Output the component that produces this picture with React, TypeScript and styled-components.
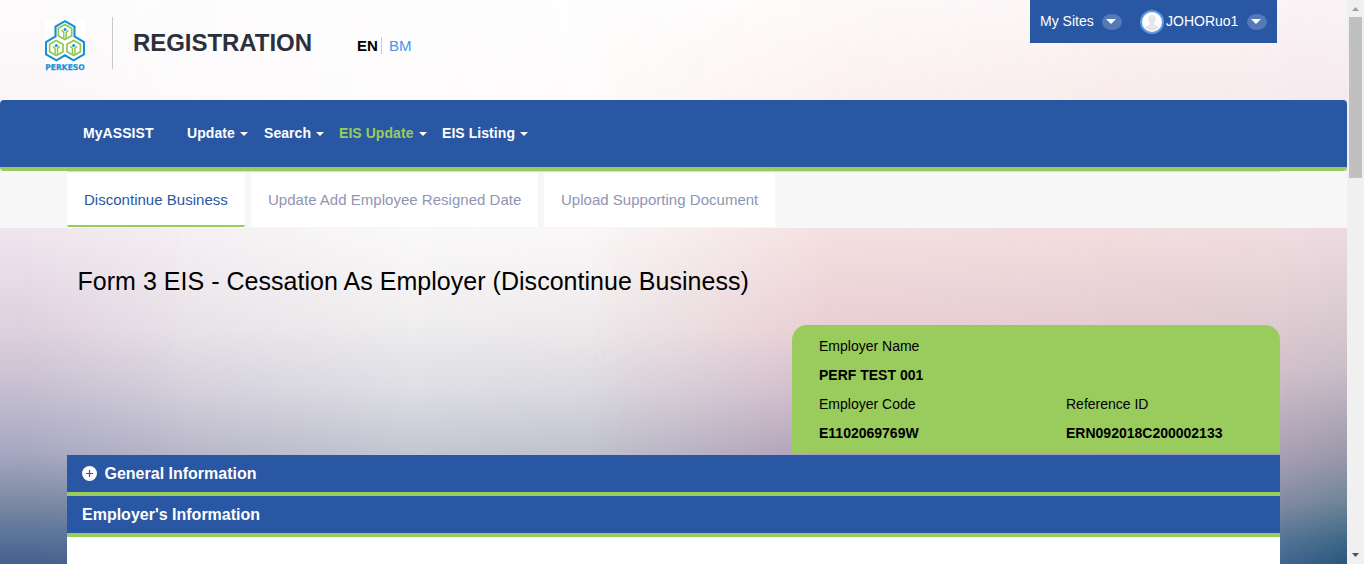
import React from "react";
import styled, { createGlobalStyle } from "styled-components";

const BLUE = "#2957a4";
const GREEN = "#99cc5c";

const GlobalStyle = createGlobalStyle`
  * { box-sizing: border-box; }
  html, body { margin: 0; padding: 0; overflow: hidden; }
  body { font-family: "Liberation Sans", Arial, sans-serif; font-size: 14px; color: #000; }
`;

const Frame = styled.div`
  display: flex;
  height: 564px;
  width: 1364px;
  overflow: hidden;
`;

const Page = styled.div`
  position: relative;
  isolation: isolate;
  width: 1347px;
  height: 564px;
  overflow: hidden;
`;

const Backdrop = styled.div`
  position: absolute;
  inset: 0;
  z-index: -1;
`;

/* One vertical colour ramp, faded in horizontally between two x positions. */
const Ramp = styled.div<{ $stops: string; $from?: number; $to?: number }>`
  position: absolute;
  inset: 0;
  background: linear-gradient(to bottom, ${(p) => p.$stops});
  ${(p) =>
    p.$to !== undefined
      ? `mask-image: linear-gradient(to right, transparent ${p.$from}px, #000 ${p.$to}px);`
      : ""}
`;

const Header = styled.header`
  display: flex;
  align-items: flex-start;
  height: 100px;
  padding: 0 70px 0 45px;
`;

const LogoBox = styled.div`
  width: 40px;
  height: 50px;
  margin-top: 20px;
  background: #fff;
`;

const Divider = styled.div`
  width: 1px;
  height: 52px;
  margin: 17px 20px 0 27px;
  background: #c8c8c8;
`;

const SiteTitle = styled.h1`
  margin: 29px 0 0;
  width: 224px;
  font-size: 24px;
  letter-spacing: -0.05px;
  line-height: 28px;
  color: #2b303b;
`;

const Languages = styled.div`
  display: flex;
  margin-top: 37px;
  font-size: 15px;
  line-height: 17px;
`;

const Language = styled.span<{ $active?: boolean }>`
  color: ${(p) => (p.$active ? "#000" : "#3b9ae8")};
  font-weight: ${(p) => (p.$active ? 700 : 400)};
  ${(p) => (p.$active ? "width: 25px; border-right: 1px solid #ccc;" : "padding-left: 7px;")}
`;

const UserBar = styled.div`
  display: flex;
  align-items: center;
  width: 247px;
  height: 43px;
  margin-left: auto;
  padding-left: 10px;
  background: ${BLUE};
  color: #fff;
`;

const UserText = styled.span<{ $width: number }>`
  width: ${(p) => p.$width}px;
  margin-top: -1px;
  white-space: nowrap;
`;

const DropPill = styled.span<{ $gap?: number }>`
  display: flex;
  align-items: center;
  justify-content: center;
  width: 20px;
  height: 16px;
  margin-right: ${(p) => p.$gap ?? 0}px;
  padding-right: 3px;
  border-radius: 50%;
  background: #5479b6;
`;

const Avatar = styled.svg`
  width: 24px;
  height: 24px;
  margin-right: 2px;
`;

const Caret = styled.i<{ $size?: number }>`
  display: block;
  border: ${(p) => p.$size ?? 4}px solid transparent;
  border-top-color: #fff;
  border-bottom: 0;
`;

const Nav = styled.nav`
  display: flex;
  align-items: center;
  height: 71px;
  padding-left: 83px;
  background: ${BLUE};
  border-bottom: 4px solid ${GREEN};
  border-radius: 4px;
`;

const NavItem = styled.a<{ $width: number; $gap?: number; $active?: boolean }>`
  display: flex;
  align-items: center;
  justify-content: space-between;
  width: ${(p) => p.$width}px;
  margin-right: ${(p) => p.$gap ?? 15}px;
  color: ${(p) => (p.$active ? GREEN : "#fff")};
  font-weight: 700;
  letter-spacing: 0.06px;
  line-height: 16px;
  padding-bottom: 1px;
  white-space: nowrap;

  ${Caret} {
    margin-top: 2px;
  }
`;

const TabStrip = styled.div`
  height: 57px;
  padding: 0 67px;
  background: #f7f7f7;
`;

const Tabs = styled.div`
  display: flex;
  gap: 6px;
  height: 56px;
  border-top: 1px solid #dcdcdc;
`;

const Tab = styled.a<{ $width: number; $active?: boolean }>`
  width: ${(p) => p.$width}px;
  padding-left: 17px;
  font-size: 15px;
  letter-spacing: 0.02px;
  line-height: 56px;
  white-space: nowrap;
  background: #fff;
  color: ${(p) => (p.$active ? BLUE : "#8f95b2")};
  border-bottom: ${(p) => (p.$active ? `2px solid ${GREEN}` : "0")};
  border-radius: ${(p) => (p.$active ? "0 0 2px 2px" : "0")};
`;

const Content = styled.main`
  display: flex;
  flex-direction: column;
  padding: 0 67px;
`;

const FormTitle = styled.h2`
  height: 97px;
  margin: 0;
  padding: 39px 0 0 10.5px;
  font-size: 25px;
  letter-spacing: 0.03px;
  line-height: 29px;
  font-weight: 400;
`;

const EmployerCard = styled.section`
  align-self: flex-end;
  display: grid;
  grid-template-columns: 247px 1fr;
  grid-auto-rows: 29px;
  width: 488px;
  height: 128px;
  margin-bottom: 2px;
  padding: 7px 0 0 27px;
  line-height: 29px;
  background: ${GREEN};
  border-radius: 15px 15px 0 0;
`;

const Field = styled.span<{ $bold?: boolean; $wide?: boolean }>`
  font-weight: ${(p) => (p.$bold ? 700 : 400)};
  grid-column: ${(p) => (p.$wide ? "1 / -1" : "auto")};
`;

const SectionBar = styled.div`
  display: flex;
  align-items: center;
  height: 41px;
  padding-left: 15px;
  gap: 8px;
  background: ${BLUE};
  border-bottom: 4px solid ${GREEN};
  color: #fff;
  font-size: 16px;
  font-weight: 700;
`;

const Panel = styled.div`
  height: 40px;
  background: #fff;
`;

const Scrollbar = styled.div`
  display: flex;
  flex-direction: column;
  align-items: center;
  width: 17px;
  background: #f0f0f0;
`;

const Thumb = styled.div`
  width: 13px;
  height: 161px;
  margin-bottom: auto;
  background: #c0c0c0;
`;

const ScrollArrow = styled.svg`
  width: 17px;
  height: 17px;
`;

const PlusBadge = styled.svg`
  width: 15px;
  height: 15px;
  margin-left: -0.5px;
`;

const Cell = ({ x, y }: { x: number; y: number }) => (
  <g transform={`translate(${x} ${y})`} fill="none" stroke="#8fc850" strokeWidth="1.7">
    <path d="M0-7.500 6.700-3.700V3.700L0 7.500-6.700 3.700V-3.700Z" />
    <path d="M-3.400-1.600-1.200.4V6M3.400-1.600 1.200.4V6" strokeWidth="1.5" />
    <circle cy="-2.600" r="1.500" fill="#1690d4" stroke="none" />
  </g>
);

const Logo = () => (
  <svg width="40" height="54" viewBox="0 0 40 54">
    <path
      d="M20 1.200 29.500 6.500V16.300L39 22V34.300L28.500 40.300 20 35.300 11.500 40.300 1 34.300V22L10.500 16.300V6.500Z"
      fill="#fff"
      stroke="#1690d4"
      strokeWidth="2.100"
    />
    <Cell x={20} y={12} />
    <Cell x={11.3} y={28} />
    <Cell x={28.7} y={28} />
    <text
      x="0.2"
      y="49.7"
      textLength="39.6"
      lengthAdjust="spacingAndGlyphs"
      fontFamily="DejaVu Sans, sans-serif"
      fontSize="7.9"
      fontWeight="700"
      fill="#1690d4"
      stroke="#1690d4"
      strokeWidth="0.25"
    >
      PERKESO
    </text>
  </svg>
);

const PlusIcon = () => (
  <PlusBadge viewBox="0 0 15 15">
    <circle cx="7.5" cy="7.5" r="7.5" fill="#fff" />
    <path d="M7.5 4v7M4 7.5h7" stroke={BLUE} strokeWidth="1.2" />
  </PlusBadge>
);

const ramps = [
  { stops: "#fdfbfc 0, #fbf7f9 90px, #efe5ed 235px, #dfd1df 325px, #cec5d5 370px, #a9a9c3 450px, #7f8ba5 500px, #5a749a 535px, #47618f 564px" },
  { from: 20, to: 190, stops: "#fdfcfc 0, #fcfafb 90px, #f3eef2 235px, #e7e1e7 330px, #d3cfdb 390px, #b8b6c9 452px, #8791ab 500px, #607799 535px, #4b6592 564px" },
  { from: 150, to: 420, stops: "#fefefe 0, #fefcfd 90px, #faf8f9 235px, #f0eeef 320px, #dedee4 390px, #c3c7d2 452px, #c3c7d2 564px" },
  { from: 420, to: 620, stops: "#fefefe 0, #fefbfb 90px, #faf6f6 235px, #ece8ea 330px, #dad8de 390px, #bfc1cd 452px, #bfc1cd 564px" },
  { from: 590, to: 820, stops: "#fefafa 0, #fcf2f2 90px, #f4e0e0 235px, #e9cfd4 330px, #d2bccb 390px, #b2a2b9 452px, #b2a2b9 564px" },
  { from: 820, to: 1100, stops: "#fcf6f7 0, #f9edec 90px, #f2dcdd 235px, #e4cdd1 325px, #aea3b9 454px" },
  { from: 1100, to: 1285, stops: "#fbf4f5 0, #f7ebee 90px, #efdce0 235px, #dccbd0 325px, #d2c0ca 370px, #a9a0b5 454px, #838ca4 500px, #587697 535px, #3f658f 564px" },
  { from: 1285, to: 1347, stops: "#f9f4f6 0, #f5eaf0 90px, #ead9e0 235px, #dacbd0 315px, #c9bdc8 370px, #9b98aa 454px, #70869a 500px, #3f6786 540px, #28577c 564px" },
];

export default function App() {
  return (
    <>
      <GlobalStyle />
      <Frame>
        <Page>
          <Backdrop>
            {ramps.map((r) => (
              <Ramp key={r.stops} $stops={r.stops} $from={r.from} $to={r.to} />
            ))}
          </Backdrop>
          <Header>
            <LogoBox>
              <Logo />
            </LogoBox>
            <Divider />
            <SiteTitle>REGISTRATION</SiteTitle>
            <Languages>
              <Language $active>EN</Language>
              <Language>BM</Language>
            </Languages>
            <UserBar>
              <UserText $width={62}>My Sites</UserText>
              <DropPill $gap={18}>
                <Caret $size={5} />
              </DropPill>
              <Avatar viewBox="0 0 24 24">
                <circle cx="12" cy="12" r="11" fill="#fff" stroke="#5b9be6" strokeWidth="2" />
                <path d="M12 5c5 0 4.500 6 2 8.500 0 2 4 1.500 4.500 4.500a9 9 0 0 1-13 0c.5-3 4.500-2.500 4.500-4.500C7.500 11 7 5 12 5Z" fill="#e6e6e6" />
              </Avatar>
              <UserText $width={81}>JOHORuo1</UserText>
              <DropPill>
                <Caret $size={5} />
              </DropPill>
            </UserBar>
          </Header>
          <Nav>
            <NavItem $width={88} $gap={16}>MyASSIST</NavItem>
            <NavItem $width={61} $gap={16}>Update <Caret /></NavItem>
            <NavItem $width={60}>Search <Caret /></NavItem>
            <NavItem $width={88} $active>EIS Update <Caret /></NavItem>
            <NavItem $width={86}>EIS Listing <Caret /></NavItem>
          </Nav>
          <TabStrip>
            <Tabs>
              <Tab $width={178} $active>Discontinue Business</Tab>
              <Tab $width={287}>Update Add Employee Resigned Date</Tab>
              <Tab $width={231}>Upload Supporting Document</Tab>
            </Tabs>
          </TabStrip>
          <Content>
            <FormTitle>Form 3 EIS - Cessation As Employer (Discontinue Business)</FormTitle>
            <EmployerCard>
              <Field $wide>Employer Name</Field>
              <Field $wide $bold>PERF TEST 001</Field>
              <Field>Employer Code</Field>
              <Field>Reference ID</Field>
              <Field $bold>E1102069769W</Field>
              <Field $bold>ERN092018C200002133</Field>
            </EmployerCard>
            <SectionBar>
              <PlusIcon />
              General Information
            </SectionBar>
            <SectionBar>Employer's Information</SectionBar>
            <Panel />
          </Content>
        </Page>
        <Scrollbar>
          <ScrollArrow viewBox="0 0 17 17">
            <path d="M5 11h7L8.500 7Z" fill="#a0a0a0" />
          </ScrollArrow>
          <Thumb />
          <ScrollArrow viewBox="0 0 17 17">
            <path d="M5 6h7L8.500 10Z" fill="#505050" />
          </ScrollArrow>
        </Scrollbar>
      </Frame>
    </>
  );
}
